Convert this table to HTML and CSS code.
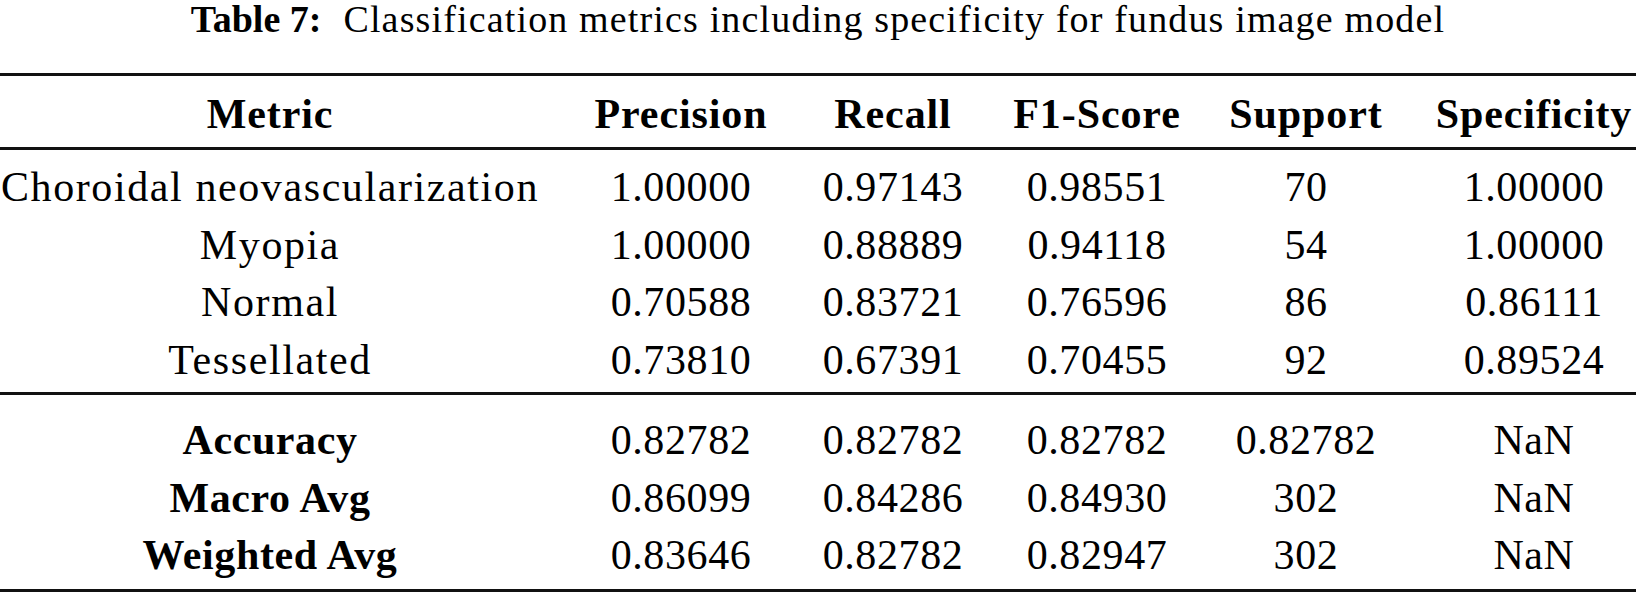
FILE: index.html
```html
<!DOCTYPE html>
<html lang="en">
<head>
<meta charset="utf-8">
<title>Table 7</title>
<link rel="stylesheet" href="styles.css">
</head>
<body>
<div class="caption"><span class="caption-label">Table 7:</span><span class="caption-text">Classification metrics including specificity for fundus image model</span></div>
<div class="metrics">
  <div class="row-group head">
    <div class="cell">Metric</div>
    <div class="cell">Precision</div>
    <div class="cell">Recall</div>
    <div class="cell">F1-Score</div>
    <div class="cell">Support</div>
    <div class="cell">Specificity</div>
  </div>
  <div class="row-group body">
    <div class="cell name">Choroidal neovascularization</div>
    <div class="cell">1.00000</div>
    <div class="cell">0.97143</div>
    <div class="cell">0.98551</div>
    <div class="cell">70</div>
    <div class="cell">1.00000</div>

    <div class="cell name">Myopia</div>
    <div class="cell">1.00000</div>
    <div class="cell">0.88889</div>
    <div class="cell">0.94118</div>
    <div class="cell">54</div>
    <div class="cell">1.00000</div>

    <div class="cell name">Normal</div>
    <div class="cell">0.70588</div>
    <div class="cell">0.83721</div>
    <div class="cell">0.76596</div>
    <div class="cell">86</div>
    <div class="cell">0.86111</div>

    <div class="cell name">Tessellated</div>
    <div class="cell">0.73810</div>
    <div class="cell">0.67391</div>
    <div class="cell">0.70455</div>
    <div class="cell">92</div>
    <div class="cell">0.89524</div>
  </div>
  <div class="row-group summary">
    <div class="cell name">Accuracy</div>
    <div class="cell">0.82782</div>
    <div class="cell">0.82782</div>
    <div class="cell">0.82782</div>
    <div class="cell">0.82782</div>
    <div class="cell">NaN</div>

    <div class="cell name">Macro Avg</div>
    <div class="cell">0.86099</div>
    <div class="cell">0.84286</div>
    <div class="cell">0.84930</div>
    <div class="cell">302</div>
    <div class="cell">NaN</div>

    <div class="cell name">Weighted Avg</div>
    <div class="cell">0.83646</div>
    <div class="cell">0.82782</div>
    <div class="cell">0.82947</div>
    <div class="cell">302</div>
    <div class="cell">NaN</div>
  </div>
</div>
</body>
</html>
```
FILE: styles.css
```css
html, body {
  margin: 0;
  padding: 0;
  background: #ffffff;
  color: #000000;
  font-family: "Liberation Serif", "Times New Roman", serif;
}

.caption {
  text-align: center;
  font-size: 38px;
  line-height: 38px;
  letter-spacing: 1.15px;
  white-space: nowrap;
  margin-bottom: 35px;
}

.caption-label {
  font-weight: bold;
  letter-spacing: 0;
  margin-right: 22px;
}

.metrics {
  width: 1636px;
}

.row-group {
  display: grid;
  grid-template-columns: 567px 228px 196px 212px 206px 227px;
  font-size: 42px;
  line-height: 57.5px;
}

.head {
  border-top: 3px solid #111;
  border-bottom: 3px solid #111;
  padding: 9px 0 4px;
  line-height: 58px;
  font-weight: bold;
}

.head .cell {
  letter-spacing: 0.9px;
}

.body {
  padding: 9px 0 3px;
}

.summary {
  border-top: 3px solid #111;
  border-bottom: 3px solid #111;
  padding: 17px 0 4.5px;
}

.cell {
  display: flex;
  justify-content: center;
  padding: 0 27px;
  white-space: nowrap;
  letter-spacing: 0.6px;
}

.cell:nth-child(6n+1) {
  padding-left: 0;
}

.cell:nth-child(6n) {
  padding-right: 4px;
}

.name {
  letter-spacing: 1.6px;
}

.summary .name {
  font-weight: bold;
  letter-spacing: 0.6px;
}
```
